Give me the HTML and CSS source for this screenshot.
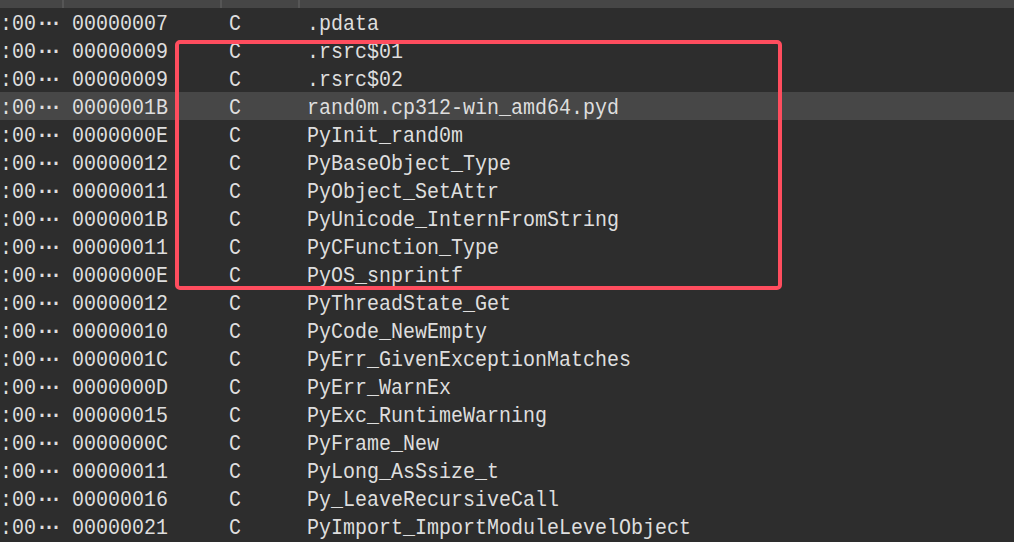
FILE: index.html
```html
<!DOCTYPE html>
<html>
<head>
<meta charset="utf-8">
<link rel="stylesheet" href="styles.css">
</head>
<body>
<div class="view">
  <div class="header">
    <div class="hcell c1"></div>
    <div class="hcell c2"></div>
    <div class="hcell c3"></div>
    <div class="hcell c4"></div>
  </div>
  <div class="rows">
    <div class="row"><span class="cell c1">:00<span class="ell">···</span></span><span class="cell c2">00000007</span><span class="cell c3">C</span><span class="cell c4">.pdata</span></div>
    <div class="row"><span class="cell c1">:00<span class="ell">···</span></span><span class="cell c2">00000009</span><span class="cell c3">C</span><span class="cell c4">.rsrc$01</span></div>
    <div class="row"><span class="cell c1">:00<span class="ell">···</span></span><span class="cell c2">00000009</span><span class="cell c3">C</span><span class="cell c4">.rsrc$02</span></div>
    <div class="row sel"><span class="cell c1">:00<span class="ell">···</span></span><span class="cell c2">0000001B</span><span class="cell c3">C</span><span class="cell c4">rand0m.cp312-win_amd64.pyd</span></div>
    <div class="row"><span class="cell c1">:00<span class="ell">···</span></span><span class="cell c2">0000000E</span><span class="cell c3">C</span><span class="cell c4">PyInit_rand0m</span></div>
    <div class="row"><span class="cell c1">:00<span class="ell">···</span></span><span class="cell c2">00000012</span><span class="cell c3">C</span><span class="cell c4">PyBaseObject_Type</span></div>
    <div class="row"><span class="cell c1">:00<span class="ell">···</span></span><span class="cell c2">00000011</span><span class="cell c3">C</span><span class="cell c4">PyObject_SetAttr</span></div>
    <div class="row"><span class="cell c1">:00<span class="ell">···</span></span><span class="cell c2">0000001B</span><span class="cell c3">C</span><span class="cell c4">PyUnicode_InternFromString</span></div>
    <div class="row"><span class="cell c1">:00<span class="ell">···</span></span><span class="cell c2">00000011</span><span class="cell c3">C</span><span class="cell c4">PyCFunction_Type</span></div>
    <div class="row"><span class="cell c1">:00<span class="ell">···</span></span><span class="cell c2">0000000E</span><span class="cell c3">C</span><span class="cell c4">PyOS_snprintf</span></div>
    <div class="row"><span class="cell c1">:00<span class="ell">···</span></span><span class="cell c2">00000012</span><span class="cell c3">C</span><span class="cell c4">PyThreadState_Get</span></div>
    <div class="row"><span class="cell c1">:00<span class="ell">···</span></span><span class="cell c2">00000010</span><span class="cell c3">C</span><span class="cell c4">PyCode_NewEmpty</span></div>
    <div class="row"><span class="cell c1">:00<span class="ell">···</span></span><span class="cell c2">0000001C</span><span class="cell c3">C</span><span class="cell c4">PyErr_GivenExceptionMatches</span></div>
    <div class="row"><span class="cell c1">:00<span class="ell">···</span></span><span class="cell c2">0000000D</span><span class="cell c3">C</span><span class="cell c4">PyErr_WarnEx</span></div>
    <div class="row"><span class="cell c1">:00<span class="ell">···</span></span><span class="cell c2">00000015</span><span class="cell c3">C</span><span class="cell c4">PyExc_RuntimeWarning</span></div>
    <div class="row"><span class="cell c1">:00<span class="ell">···</span></span><span class="cell c2">0000000C</span><span class="cell c3">C</span><span class="cell c4">PyFrame_New</span></div>
    <div class="row"><span class="cell c1">:00<span class="ell">···</span></span><span class="cell c2">00000011</span><span class="cell c3">C</span><span class="cell c4">PyLong_AsSsize_t</span></div>
    <div class="row"><span class="cell c1">:00<span class="ell">···</span></span><span class="cell c2">00000016</span><span class="cell c3">C</span><span class="cell c4">Py_LeaveRecursiveCall</span></div>
    <div class="row"><span class="cell c1">:00<span class="ell">···</span></span><span class="cell c2">00000021</span><span class="cell c3">C</span><span class="cell c4">PyImport_ImportModuleLevelObject</span></div>
  </div>
  <div class="mark"></div>
</div>
</body>
</html>
```

FILE: styles.css
```css
html, body {
  margin: 0;
  padding: 0;
  background: #2d2d2d;
  overflow: hidden;
}

.view {
  position: relative;
  width: 1014px;
  height: 542px;
  background: #2d2d2d;
  overflow: hidden;
}

.header {
  display: grid;
  grid-template-columns: 64px 158px 78px 1fr;
  height: 8px;
  background: #464646;
}

.hcell {
  border-right: 2px solid #565656;
}

.hcell.c4 {
  border-right: none;
}

.rows {
  display: flex;
  flex-direction: column;
}

.row {
  display: grid;
  grid-template-columns: 72px 157px 78px 1fr;
  height: 28px;
  align-items: center;
  font-family: "Liberation Mono", "DejaVu Sans Mono", monospace;
  font-size: 20px;
  line-height: 22px;
  color: #dedede;
  white-space: nowrap;
}

.row.sel {
  background: #474747;
}

.cell {
  display: block;
  overflow: hidden;
  padding-top: 3px;
  transform: scaleY(1.12);
}

.ell {
  font-weight: bold;
  letter-spacing: -5px;
}

.mark {
  position: absolute;
  left: 175px;
  top: 40px;
  width: 599px;
  height: 242px;
  border: 4px solid #ff4d5e;
  border-radius: 5px;
}
```
